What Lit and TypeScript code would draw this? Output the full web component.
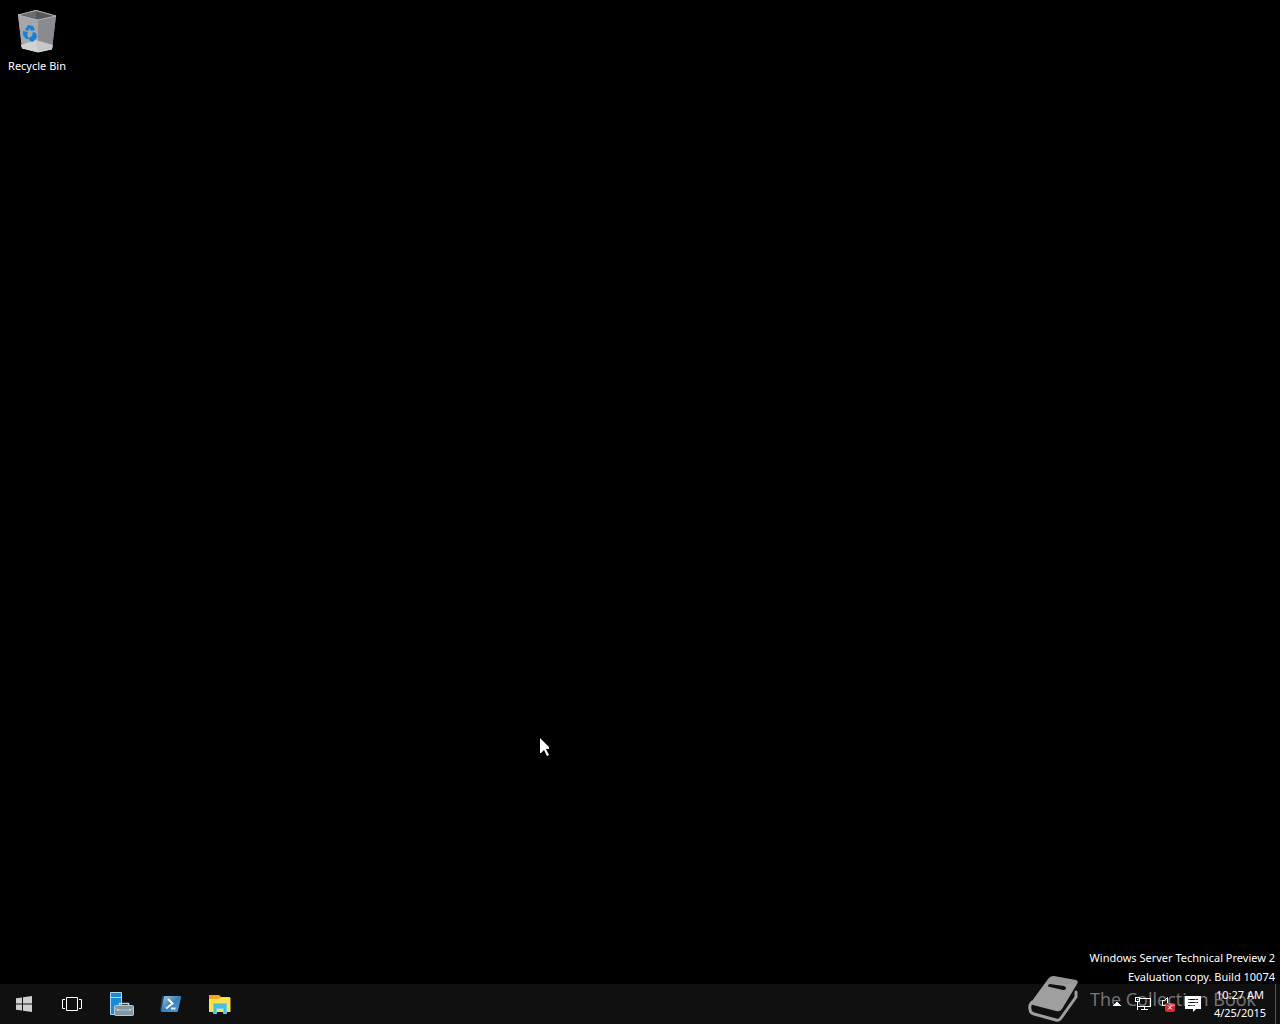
import { LitElement, html, css, svg } from "lit";
import { customElement } from "lit/decorators.js";

const recycleBin = html`<svg width="44" height="48" viewBox="15 6 44 48" aria-hidden="true">
  <path d="M18 15L36 10L56 16L52 49L38 52L22 48Z" fill="#8f9194" />
  <path d="M18 15L38 19L38 52L22 48Z" fill="#a5a7aa" />
  <path d="M38 19L56 16L52 49L38 52Z" fill="#898b8e" />
  <path d="M18 15L36 10L56 16L38 20Z" fill="#55575a" />
  <path d="M22 15L36 11L36 18Z" fill="#6b6d70" />
  <path d="M18 15L36 10.500L56 16L38 20Z" fill="none" stroke="#b4b6b8" stroke-width="1" />
  <path d="M21 45L36 40L53 45L52 49L38 52L22 48Z" fill="#c6c7c8" />
  <path d="M21 45L36 40L38 52L22 48Z" fill="#d0d1d2" />
  <path d="M22 48L38 52L52 49" fill="none" stroke="#d8d9da" stroke-width="1" />
  <g fill="#1a7fd4">
    <path d="M25 30L28 25L33 26L35 30L31 31L30 28L28 31Z" />
    <path d="M23 31L28 32L27 35L29 39L26 39L23 35Z" />
    <path d="M29 38L32 36L33 32L36 33L37 37L34 41L32 42L29 40Z" />
  </g>
</svg>`;

const startLogo = html`<svg width="16" height="16" viewBox="0 0 16 16" aria-hidden="true">
  <path fill="#cfcfcf" d="M0 2.300L6 1.400V7.500H0ZM7 1.200L16 0V7.500H7ZM0 8.500H6V14.600L0 13.700ZM7 8.500H16V16L7 14.800Z" />
</svg>`;

const taskView = html`<svg width="22" height="16" viewBox="0 0 22 16" aria-hidden="true" fill="none" stroke="#fff">
  <path d="M4.500 1.500H15.500V14.500H4.500ZM3 3.500H.5V12.500H3M17 3.500H19.500V12.500H17" />
</svg>`;

const serverManager = html`<svg width="24" height="24" viewBox="0 0 24 24" aria-hidden="true">
  <path d="M.5.5H11.500V22.500H.5Z" fill="#1e8ad6" stroke="#a9d6f2" />
  <path d="M1 5.500H11" stroke="#a9d6f2" />
  <path d="M9.500 14V11.500H18.500V14" fill="none" stroke="#c4d2dc" stroke-width="1.500" />
  <rect x="4.500" y="13.500" width="19" height="10" rx="1" fill="#8297a6" stroke="#b9c8d3" />
  <path d="M5 16L8 18H20L23 16" fill="none" stroke="#b0c0cb" />
  <path d="M8 17V19M20 17V19" stroke="#e4ebf0" />
</svg>`;

const powershell = html`<svg width="22" height="20" viewBox="0 0 22 20" aria-hidden="true">
  <defs>
    <linearGradient id="ps" x1="0" y1="0" x2="1" y2="1">
      <stop offset="0" stop-color="#a6cde8" />
      <stop offset=".5" stop-color="#3a7fb8" />
      <stop offset="1" stop-color="#4ba0d6" />
    </linearGradient>
  </defs>
  <path d="M2 2H6L3 17H0Z" fill="#1c4567" />
  <path d="M5 2H20.500Q21.500 2 21 3.500L18 16.500Q17.700 18 16.500 18H2Q1 18 1.300 16.500L4 3Q4.200 2 5 2Z" fill="url(#ps)" />
  <path d="M8 5L12.500 9.500L6 14.500" fill="none" stroke="#fff" stroke-width="2" />
  <path d="M11 14.500H15.500" stroke="#e6f2fa" stroke-width="2" />
</svg>`;

const explorer = html`<svg width="22" height="20" viewBox="0 0 22 20" aria-hidden="true">
  <path d="M0 1H10L12 3H21V18H0Z" fill="#f4a51c" />
  <path d="M12 3H21V6H9Z" fill="#f9d34b" />
  <path d="M0 5H9L11 4H21.500V18H0Z" fill="#fce14d" />
  <path d="M4.500 19.500V9.500H17.500V19.500H14.500V14.500H7.500V19.500Z" fill="#45bfe0" stroke="#6fd0e8" />
</svg>`;

const chevron = html`<svg width="14" height="4" viewBox="0 0 14 4" aria-hidden="true">
  <path d="M0 4V3H1V2H2V1H3V0H5V1H6V2H7V3H8V4Z" fill="#fff" />
</svg>`;

const network = html`<svg width="18" height="14" viewBox="0 0 18 14" aria-hidden="true" fill="none" stroke="#fff" shape-rendering="crispEdges">
  <path d="M5 1.500H15.500V9.500H3M.5.5H4.500V4.500H.5ZM2.500 5V13M9.500 10V12.500M6 12.500H13" />
  <path d="M2 2.500H3" />
</svg>`;

const volume = html`<svg width="16" height="16" viewBox="0 0 16 16" aria-hidden="true">
  <path d="M3 4.500H1.500V9.500H3.500L6.500 12.500V1.500L3.500 4.500Z" fill="none" stroke="#fff" />
  <rect x="4" y="7" width="10" height="9" rx="2" fill="#d42a34" />
  <path d="M7 9.500L11 13.500M11 9.500L7 13.500" stroke="#fff" />
</svg>`;

const notifications = html`<svg width="16" height="16" viewBox="0 0 16 16" aria-hidden="true">
  <path d="M0 0H16V13H11L8 16V13H0Z" fill="#fff" />
  <path d="M3 3.500H13M3 6.500H13M3 9.500H10" stroke="#111" />
</svg>`;

const book = svg`
  <path fill="#fff" fill-rule="evenodd" d="M20 3Q22 0 26 0L48 4Q51 5 49 8L34 33Q32 36 28 35L5 29Q2 28 4 25ZM22 8Q20 8 20 10Q20 11 22 11L35 14Q38 14 38 12Q38 11 36 10Z" />
  <path fill="none" stroke="#fff" stroke-width="3" stroke-linejoin="round" stroke-linecap="round" d="M4 26Q1 29 2 33Q2 37 6 38L28 44Q31 45 33 42L48 21V16" />
`;

@customElement("app-root")
export class AppRoot extends LitElement {
  static styles = css`
    :host {
      display: block;
      background: #000;
      color: #fff;
      font: 11px/18px "Noto Sans", "Open Sans", sans-serif;
    }
    .screen {
      position: relative;
      display: flex;
      flex-direction: column;
      min-height: 100vh;
      overflow: hidden;
    }
    .desktop {
      flex: 1;
      display: flex;
      flex-direction: column;
      justify-content: space-between;
    }
    button {
      display: flex;
      align-items: center;
      justify-content: center;
      padding: 0;
      border: 0;
      background: none;
      color: inherit;
      font: inherit;
    }
    .shortcut {
      flex-direction: column;
      align-self: flex-start;
      width: 74px;
      padding-top: 6px;
      gap: 3px;
    }
    .build {
      display: grid;
      gap: 4px;
      margin: 0;
      padding: 0 5px;
      text-align: right;
      line-height: 15px;
    }
    .bar {
      display: flex;
      justify-content: space-between;
      height: 40px;
      background: #101010;
    }
    .apps,
    .tray {
      display: flex;
    }
    .apps {
      gap: 1px;
    }
    .apps button {
      width: 48px;
    }
    .tray {
      align-items: center;
      gap: 7px;
    }
    .status {
      display: flex;
      align-items: center;
      gap: 8px;
      padding-right: 4px;
    }
    .clock {
      flex-direction: column;
      width: 56px;
    }
    .peek {
      width: 5px;
      height: 40px;
      border-left: 1px solid #555;
    }
    .mark {
      position: absolute;
      right: 24px;
      bottom: 2px;
      display: flex;
      align-items: center;
      gap: 11px;
      pointer-events: none;
      opacity: 0.6;
      font: 18px/24px "Open Sans", sans-serif;
    }
    .name {
      opacity: 0.7;
    }
    .pointer {
      position: absolute;
      left: 540px;
      top: 738px;
      pointer-events: none;
    }
  `;

  render() {
    return html`
      <div class="screen">
        <main class="desktop">
          <button class="shortcut">${recycleBin}<span>Recycle Bin</span></button>
          <p class="build">
            <span>Windows Server Technical Preview 2</span>
            <span>Evaluation copy. Build 10074</span>
          </p>
        </main>
        <footer class="bar">
          <nav class="apps" aria-label="Taskbar">
            <button aria-label="Start">${startLogo}</button>
            <button aria-label="Task View">${taskView}</button>
            <button aria-label="Server Manager">${serverManager}</button>
            <button aria-label="Windows PowerShell">${powershell}</button>
            <button aria-label="File Explorer">${explorer}</button>
          </nav>
          <div class="tray">
            <div class="status">
              <button aria-label="Show hidden icons">${chevron}</button>
              <button aria-label="Network">${network}</button>
              <button aria-label="Volume">${volume}</button>
              <button aria-label="Notifications">${notifications}</button>
            </div>
            <button class="clock"><span>10:27 AM</span><span>4/25/2015</span></button>
            <button class="peek" aria-label="Show desktop"></button>
          </div>
        </footer>
        <div class="mark">
          <svg width="51" height="46" viewBox="0 0 51 46" aria-hidden="true">${book}</svg>
          <span class="name">The Collection Book</span>
        </div>
        <svg class="pointer" width="10" height="18" viewBox="0 0 10 18" aria-hidden="true">
          <path d="M0 0L9 9V11H6L9 17L7 18L4 12L1 15H0Z" fill="#fff" />
        </svg>
      </div>
    `;
  }
}
